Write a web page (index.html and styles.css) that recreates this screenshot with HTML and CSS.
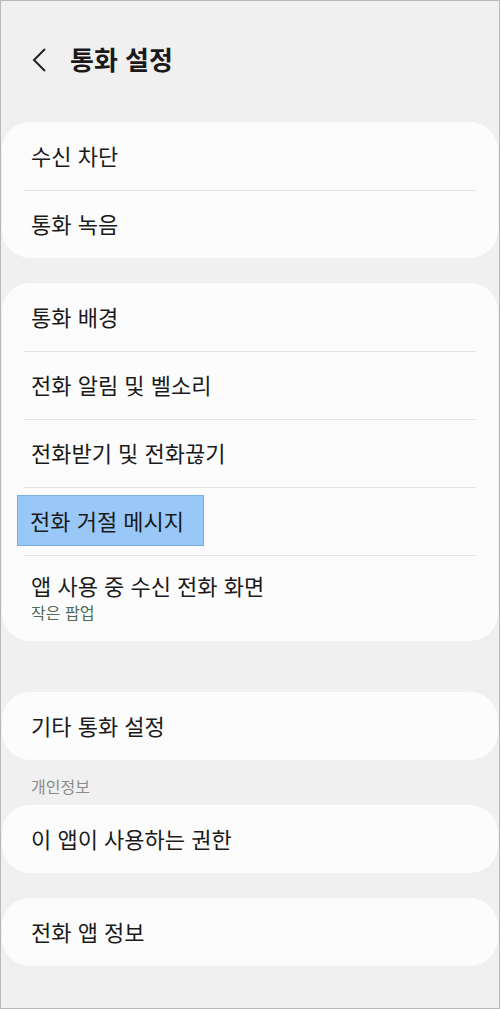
FILE: index.html
```html
<!DOCTYPE html>
<html lang="ko">

<head>
    <meta charset="UTF-8">
    <title>통화 설정</title>
    <link rel="stylesheet" href="styles.css">
</head>

<body>
    <div class="screen">
        <!-- 상단 제목 -->
        <div class="header">
            <svg class="back" width="14" height="24" viewBox="0 0 14 24">
                <path d="M13 1 L2 12 L13 23" fill="none" stroke="#222" stroke-width="2" />
            </svg>
            <h1 class="title">통화 설정</h1>
        </div>

        <div class="card">
            <div class="row">수신 차단</div>
            <div class="row">통화 녹음</div>
        </div>

        <div class="card">
            <div class="row">통화 배경</div>
            <div class="row">전화 알림 및 벨소리</div>
            <div class="row">전화받기 및 전화끊기</div>
            <div class="row"><span class="highlight">전화 거절 메시지</span></div>
            <div class="row row-sub">
                <div class="row-title">앱 사용 중 수신 전화 화면</div>
                <div class="row-desc">작은 팝업</div>
            </div>
        </div>

        <div class="card card-other">
            <div class="row">기타 통화 설정</div>
        </div>

        <div class="section-label">개인정보</div>

        <div class="card">
            <div class="row">이 앱이 사용하는 권한</div>
        </div>

        <div class="card">
            <div class="row">전화 앱 정보</div>
        </div>
    </div>
</body>

</html>
```

FILE: styles.css
```css
body {
    margin: 0;
    padding: 0;
    font-family: "Noto Sans CJK KR", "Noto Sans", sans-serif;
    background-color: #f0f0f0;
}

.screen {
    box-sizing: border-box;
    height: 1009px;
    border: 1px solid #b9b9b9;
    padding: 0 1px;
    background-color: #f0f0f0;
    overflow: hidden;
}

.header {
    height: 115px;
    padding-bottom: 6px;
    display: flex;
    align-items: center;
    padding-left: 30px;
}

.back {
    display: block;
    margin-right: 24px;
    margin-top: 2px;
}

.title {
    margin: 0;
    font-size: 26px;
    font-weight: 700;
    color: #1a1a1a;
}

.card {
    background-color: #fcfcfc;
    border-radius: 28px;
    margin-bottom: 25px;
}

.card-other {
    margin-top: 51px;
    margin-bottom: 0;
}

.row {
    box-sizing: border-box;
    height: 68px;
    display: flex;
    align-items: center;
    padding: 0 0 3px 29px;
    font-size: 22px;
    color: #1a1a1a;
    position: relative;
}

.row + .row::before {
    content: "";
    position: absolute;
    top: 0;
    left: 22px;
    right: 22px;
    height: 1px;
    background-color: #e3e3e3;
}

.row-sub {
    height: 86px;
    padding-bottom: 2px;
    flex-direction: column;
    align-items: flex-start;
    justify-content: center;
}

.row-title {
    line-height: 30px;
}

.row-desc {
    font-size: 16px;
    line-height: 24px;
    color: #4c6b57;
}

.highlight {
    background-color: #99c8f8;
    border: 1px solid #78afe6;
    margin-left: -14px;
    margin-top: 2px;
    padding: 9px 19px 9px 12px;
    line-height: 31px;
}

.section-label {
    height: 45px;
    box-sizing: border-box;
    padding: 15px 0 0 29px;
    font-size: 16px;
    line-height: 22px;
    color: #8a8a8a;
}
```
